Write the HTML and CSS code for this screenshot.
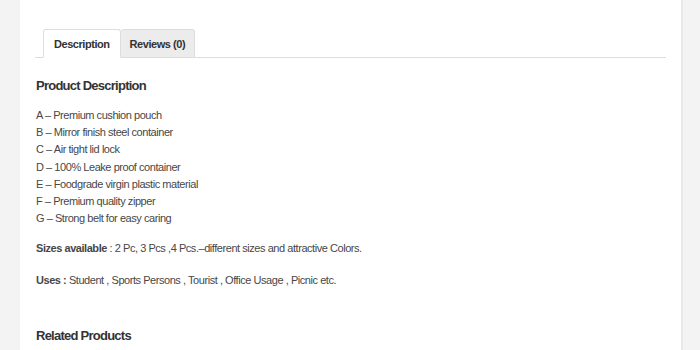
FILE: index.html
```html
<!DOCTYPE html>
<html lang="en">
<head>
    <meta charset="UTF-8">
    <meta name="viewport" content="width=device-width, initial-scale=1.0">
    <title>Product | Lunch Box</title>
    <link rel="stylesheet" href="styles.css">
</head>
<body>
    <div class="page">
        <div class="tabs">
            <ul class="tab-list">
                <li class="tab active">Description</li>
                <li class="tab">Reviews (0)</li>
            </ul>

            <div class="tab-panel">
                <h2>Product Description</h2>
                <ul class="features">
                    <li>A – Premium cushion pouch</li>
                    <li>B – Mirror finish steel container</li>
                    <li>C – Air tight lid lock</li>
                    <li>D – 100% Leake proof container</li>
                    <li>E – Foodgrade virgin plastic material</li>
                    <li>F – Premium quality zipper</li>
                    <li>G – Strong belt for easy caring</li>
                </ul>
                <p><strong>Sizes available</strong> : 2 Pc, 3 Pcs ,4 Pcs.–different sizes and attractive Colors.</p>
                <p><strong>Uses :</strong> Student , Sports Persons , Tourist , Office Usage , Picnic etc.</p>
            </div>
        </div>

        <div class="related">
            <h2>Related Products</h2>
        </div>
    </div>
</body>
</html>
```

FILE: styles.css
```css
:root {
    --page-bg: #f3f3f3;
    --text-color: #474747;
    --heading-color: #333333;
    --border-color: #dddddd;
}

body {
    font-family: "Liberation Sans", Arial, sans-serif;
    margin: 0;
    padding: 0;
    background-color: var(--page-bg);
    color: var(--text-color);
    font-size: 11px;
    letter-spacing: -0.45px;
}

.page {
    margin-left: 20px;
    width: 631px;
    min-height: 350px;
    background-color: #ffffff;
    border-right: 2px solid #e8e8e8;
    padding: 29px 15px 0 15px;
    box-sizing: content-box;
}

.tab-list {
    list-style: none;
    margin: 0;
    padding: 0 0 0 8px;
    display: flex;
    border-bottom: 1px solid var(--border-color);
}

.tab {
    padding: 8px 10px 0 10px;
    height: 19px;
    font-weight: bold;
    font-size: 11px;
    letter-spacing: -0.45px;
    color: #333;
    border: 1px solid var(--border-color);
    border-bottom: none;
    border-radius: 3px 3px 0 0;
    background-color: #ececec;
    margin-bottom: -1px;
}

.tab.active {
    background-color: #ffffff;
    border-bottom: 1px solid #ffffff;
}

.tab + .tab {
    border-left: none;
    padding: 8px 9px 0 9px;
}

.tab-panel {
    padding: 20px 1px 0 1px;
}

h2 {
    font-size: 13px;
    letter-spacing: -0.75px;
    color: var(--heading-color);
    margin: 0;
    line-height: 16px;
}

.features {
    list-style: none;
    padding: 0;
    margin: 13px 0 13px 0;
}

.features li {
    line-height: 17.2px;
}

p {
    margin: 0 0 16px 0;
    line-height: 16px;
}

.related {
    padding: 24px 1px 0 1px;
}
```
